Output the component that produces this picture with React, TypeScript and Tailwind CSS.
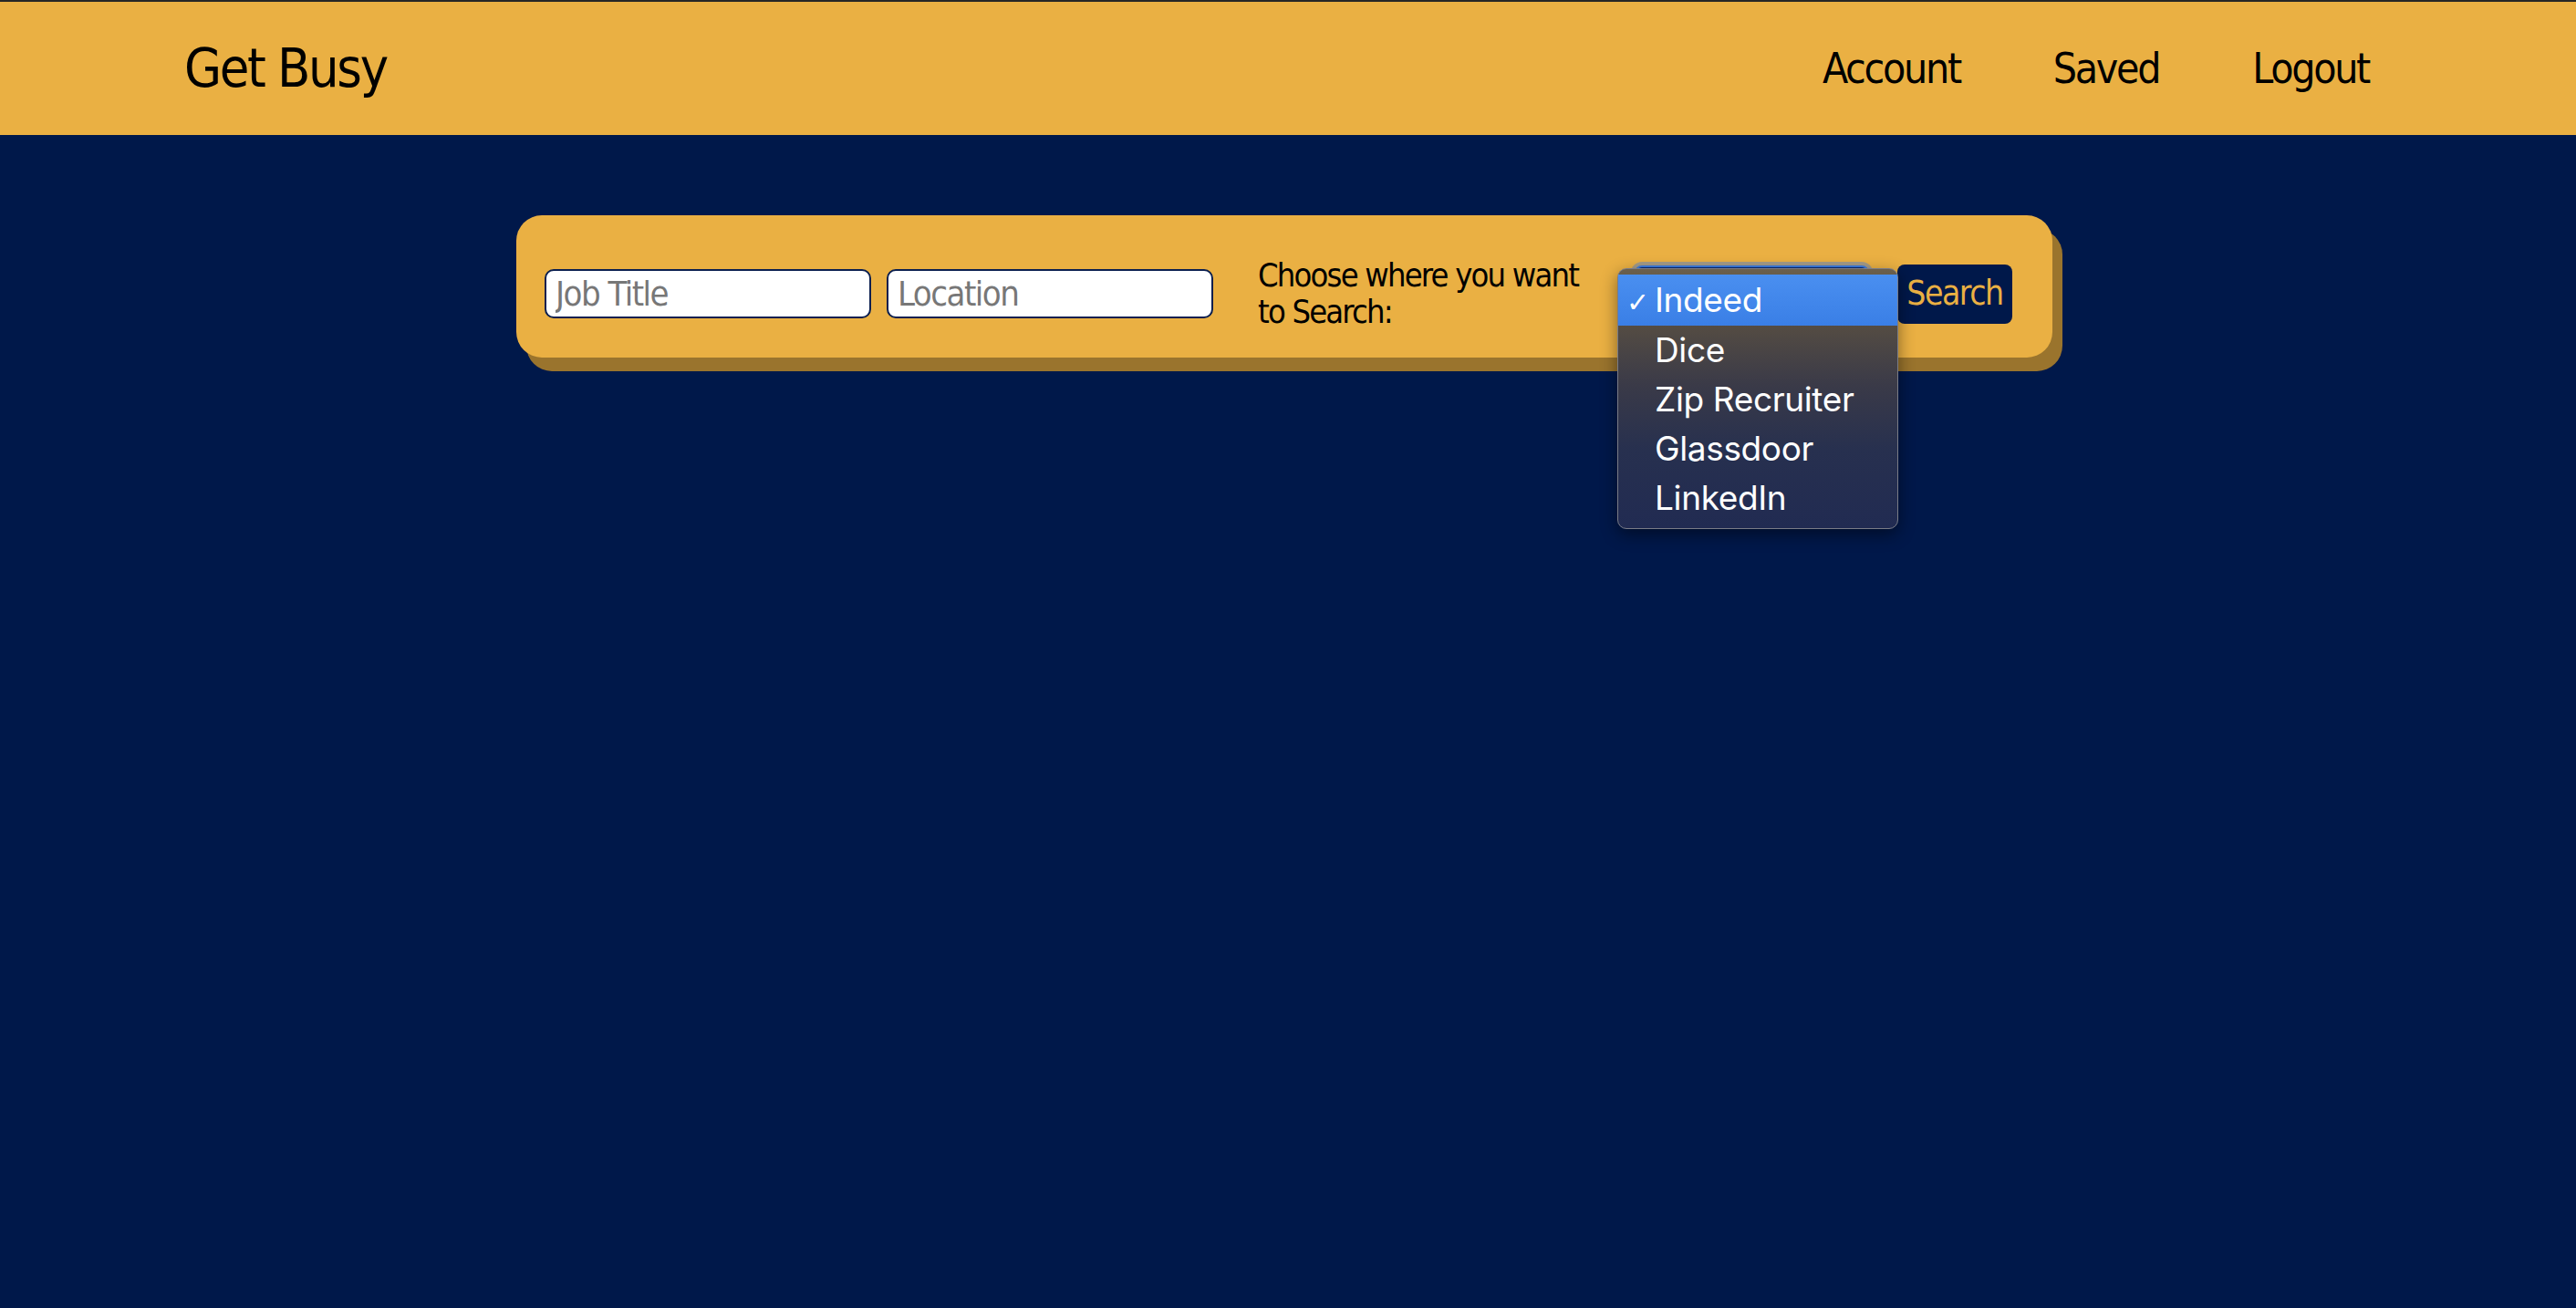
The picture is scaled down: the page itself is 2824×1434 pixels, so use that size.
import { useState } from 'react'

const sites = ['Indeed', 'Dice', 'Zip Recruiter', 'Glassdoor', 'LinkedIn']

const narrow = { fontFamily: '"Liberation Sans Narrow", "DejaVu Sans Condensed", "Liberation Sans", sans-serif' }
const system = { fontFamily: 'Inter, Roboto, "Noto Sans", sans-serif' }

function SiteMenu({ selected }: { selected: string }) {
    return (
        <div
            className="absolute left-[-19px] top-[3px] w-[308px] rounded-[10px] border border-[#7a7c86] py-[6px] shadow-[0_6px_18px_rgba(0,0,0,0.45)] bg-[linear-gradient(180deg,#6a5f4c_0%,#544c43_22%,#3a3a48_45%,#27304f_70%,#212b52_100%)]"
            style={system}
        >
            {sites.map(site => (
                <div
                    key={site}
                    className={
                        site === selected
                            ? 'relative flex h-[56px] items-center bg-[linear-gradient(180deg,#4a8ff0,#3a7fe6)] pl-[40px] text-[37px] tracking-[-0.01em] text-white'
                            : 'relative flex h-[54px] items-center pl-[40px] text-[37px] tracking-[-0.01em] text-white'
                    }
                >
                    {site === selected && (
                        <span className="absolute left-[9px] top-[8px] text-[30px] font-light" style={{ fontFamily: '"DejaVu Sans", sans-serif' }}>✓</span>
                    )}
                    {site}
                </div>
            ))}
        </div>
    )
}

export default function App() {
    const [site, setSite] = useState('Indeed')

    return (
        <div className="min-h-[1434px] w-full bg-[#00184a]" style={narrow}>
            <header className="flex h-[148px] items-center justify-between border-t-2 border-[#262626] bg-[#eab043] pl-[202px] pr-[227px]">
                <h1 className="text-[59px] tracking-[-0.04em] text-black">Get Busy</h1>
                <nav className="flex items-center gap-[102px] text-[46px] tracking-[-0.05em] text-black">
                    <a href="#">Account</a>
                    <a href="#">Saved</a>
                    <a href="#">Logout</a>
                </nav>
            </header>

            <div className="mx-auto mt-[88px] w-[1684px] translate-x-[-4px]">
                <form
                    onSubmit={e => e.preventDefault()}
                    className="flex items-center rounded-[28px] bg-[#eab043] pb-[30px] pl-[31px] pr-[43px] pt-[46px] shadow-[11px_15px_0_#9a742d]"
                >
                    <input
                        placeholder="Job Title"
                        className="h-[54px] w-[358px] rounded-[10px] border-2 border-[#0b1f4f] bg-white px-[10px] text-[38px] tracking-[-0.04em] text-black placeholder:text-[#777] outline-none"
                        style={narrow}
                    />
                    <input
                        placeholder="Location"
                        className="ml-[17px] h-[54px] w-[358px] rounded-[10px] border-2 border-[#0b1f4f] bg-white px-[10px] text-[38px] tracking-[-0.04em] text-black placeholder:text-[#777] outline-none"
                        style={narrow}
                    />
                    <label className="ml-[49px] w-[372px] text-[36px] leading-[40px] tracking-[-0.05em] text-black">
                        Choose where you want to Search:
                    </label>
                    <div className="relative ml-[41px] h-[62px] w-[257px]">
                        <select
                            value={site}
                            onChange={e => setSite(e.target.value)}
                            className="h-full w-full rounded-[8px] border-2 border-[#3b7be0] bg-[#0d2a6e] text-[36px] text-white shadow-[0_0_0_4px_rgba(80,130,220,0.45)]"
                            style={system}
                        >
                            {sites.map(s => <option key={s}>{s}</option>)}
                        </select>
                        <SiteMenu selected={site} />
                    </div>
                    <button className="ml-[31px] h-[65px] w-[126px] rounded-[8px] bg-[#00184a] text-[37px] tracking-[-0.04em] text-[#eab043]">
                        Search
                    </button>
                </form>
            </div>
        </div>
    )
}
